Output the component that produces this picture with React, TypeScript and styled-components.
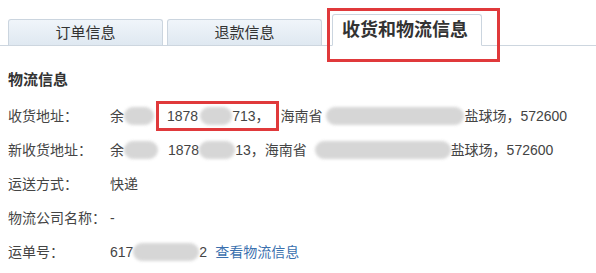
import styled, { createGlobalStyle } from "styled-components";

const GlobalStyle = createGlobalStyle`
  html, body {
    margin: 0;
    padding: 0;
    background: #ffffff;
  }
  body {
    font-family: "Liberation Sans", "Noto Sans CJK SC", sans-serif;
    color: #444;
  }
`;

const Page = styled.div`
  width: 596px;
  height: 273px;
  overflow: hidden;
`;

const TabBar = styled.div`
  display: flex;
  align-items: flex-end;
  height: 46px;
  padding-left: 8px;
  border-bottom: 1px solid #cdd6df;
  box-sizing: border-box;
`;

const Tab = styled.div<{ $active?: boolean; $gap: number; $w: number }>`
  position: relative;
  box-sizing: border-box;
  width: ${(p) => p.$w}px;
  margin-left: ${(p) => p.$gap}px;
  margin-bottom: -1px;
  height: ${(p) => (p.$active ? 32 : 27)}px;
  display: flex;
  align-items: center;
  justify-content: center;
  border: 1px solid #cbd5df;
  border-bottom: ${(p) => (p.$active ? "1px solid #fff" : "1px solid #cdd6df")};
  border-radius: 3px 3px 0 0;
  background: ${(p) =>
    p.$active ? "#ffffff" : "linear-gradient(#f0f5fa, #dfe8f1)"};
  color: #333;
  font-size: ${(p) => (p.$active ? 18 : 15)}px;
  font-weight: ${(p) => (p.$active ? 700 : 400)};
  line-height: 1;
  ${(p) => p.$active && "padding-right: 4px;"}

  ${(p) =>
    p.$active &&
    `
    &::after {
      content: "";
      position: absolute;
      top: -7px;
      left: -6px;
      right: -19px;
      bottom: -17px;
      border: 3px solid #e0393b;
      pointer-events: none;
    }
  `}
`;

const Content = styled.div`
  padding: 0 8px;
`;

const SectionTitle = styled.div`
  margin-top: 24px;
  height: 20px;
  line-height: 20px;
  font-size: 15px;
  font-weight: 700;
  color: #333;
`;

const InfoList = styled.div`
  display: grid;
  grid-template-columns: 102px 1fr;
  grid-auto-rows: 34px;
  align-items: center;
  margin-top: 9px;
  font-size: 14px;
  line-height: 20px;
  color: #444;
`;

const Label = styled.div`
  white-space: nowrap;
`;

const Value = styled.div`
  white-space: nowrap;
  display: flex;
  align-items: center;
`;

const Blur = styled.span<{ $w: number; $ml?: number }>`
  display: inline-block;
  width: ${(p) => p.$w}px;
  height: 18px;
  margin-left: ${(p) => p.$ml ?? 0}px;
  background: #d2d2d2;
  border-radius: 9px;
  filter: blur(1.5px);
  opacity: 0.9;
`;

const Mark = styled.span`
  display: inline-flex;
  align-items: center;
  height: 24px;
  padding: 0 6px 0 8px;
  margin: 0 2px 0 2px;
  border: 3px solid #e0393b;
`;

const Spaced = styled.span<{ $ml: number }>`
  margin-left: ${(p) => p.$ml}px;
`;

const Link = styled.a`
  color: #3a70ae;
  text-decoration: none;
  margin-left: 8px;
`;

export default function App() {
  return (
    <Page>
      <GlobalStyle />
      <TabBar>
        <Tab $w={155} $gap={0}>订单信息</Tab>
        <Tab $w={155} $gap={4}>退款信息</Tab>
        <Tab $w={150} $gap={10} $active>
          收货和物流信息
        </Tab>
      </TabBar>
      <Content>
        <SectionTitle>物流信息</SectionTitle>
        <InfoList>
          <Label>收货地址：</Label>
          <Value>
            余<Blur $w={30} />
            <Mark>
              1878<Blur $w={32} $ml={2} />
              713，
            </Mark>
            海南省&nbsp;<Blur $w={138} />
            盐球场，572600
          </Value>

          <Label>新收货地址：</Label>
          <Value>
            余<Blur $w={34} />
            <Spaced $ml={10}>1878</Spaced>
            <Blur $w={36} />
            13，海南省&nbsp;<Blur $w={136} $ml={4} />
            盐球场，572600
          </Value>

          <Label>运送方式：</Label>
          <Value>快递</Value>

          <Label>物流公司名称：</Label>
          <Value>-</Value>

          <Label>运单号：</Label>
          <Value>
            617<Blur $w={66} />
            2<Link href="#">查看物流信息</Link>
          </Value>
        </InfoList>
      </Content>
    </Page>
  );
}
